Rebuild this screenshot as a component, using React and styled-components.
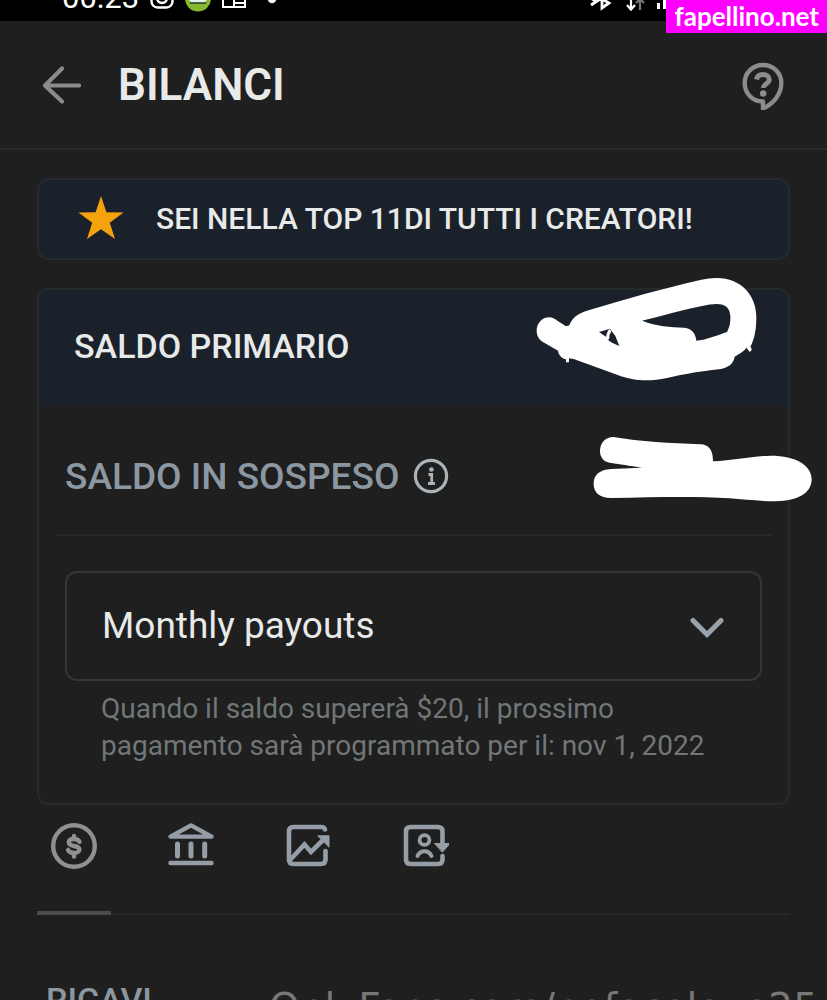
import React, { useState } from 'react'
import styled, { createGlobalStyle } from 'styled-components'

const TABS = ['Ricavi', 'Banca', 'Statistiche', 'Referral']

const TabIcon = ({ name }) => {
  if (name === 'Ricavi') {
    return (
      <svg width="48" height="48" viewBox="0 0 48 48" fill="none" stroke="currentColor">
        <circle cx="24" cy="24" r="20.8" strokeWidth="4.4" />
        <path d="M29.5 19.8c-1-2-3-2.8-5.5-2.8-3 0-5.2 1.2-5.2 3.4 0 5 10.6 2.2 10.6 7 0 2.2-2.300 3.500-5.400 3.500-2.800 0-5-1-6-3M24 14v3M24 31v3.500" strokeWidth="4.400" strokeLinecap="round" />
      </svg>
    )
  }
  if (name === 'Banca') {
    return (
      <svg width="48" height="48" viewBox="0 0 48 48" fill="none" stroke="currentColor" strokeWidth="4.4" strokeLinecap="round" strokeLinejoin="round">
        <path d="M3.500 14.600L24 3.400l20.500 11.200zM3.500 41h41" />
        <path d="M10.500 22v12M24 22v12M37.700 22v12" strokeWidth="5" />
      </svg>
    )
  }
  if (name === 'Statistiche') {
    return (
      <svg width="48" height="48" viewBox="0 0 48 48" fill="none" stroke="currentColor" strokeWidth="4.600" strokeLinecap="round" strokeLinejoin="round">
        <path d="M41 7.500c-.5-2-2-2.500-4-2.500H9.500c-3 0-4.500 1.500-4.500 4.500v28C5 40.500 6.500 42 9.500 42H37c3 0 4.500-1.500 4.500-4.500V29" />
        <path d="M6 38l14.500-15.500 6.500 7.500L40 17" strokeLinejoin="miter" />
        <path d="M34 13.800h11v11z" fill="currentColor" strokeWidth="1" />
      </svg>
    )
  }
  return (
    <svg width="48" height="48" viewBox="0 0 48 48" fill="none" stroke="currentColor" strokeWidth="4.600" strokeLinecap="round">
      <path d="M41.500 23V9.500C41.500 6.500 40 5 37 5H9.500C6.500 5 5 6.500 5 9.500v28C5 40.500 6.500 42 9.500 42H37c3 0 4.500-1.500 4.500-4.500V34" />
      <circle cx="23.500" cy="18" r="4.900" strokeWidth="3.800" />
      <path d="M16.500 34c1.500-3.300 4-4.800 7-4.800s5.500 1.500 7 4.800" strokeWidth="4" />
      <path d="M34 21.500h15L41.500 30z" fill="currentColor" strokeWidth="1" />
    </svg>
  )
}

const Scribbles = () => (
  <ScribbleLayer viewBox="0 0 921 780" aria-hidden="true">
    <path
      fillRule="evenodd"
      d="M88 172c-22 0-38 18-38 40 0 18 8 28 24 37l40 23c2 14 12 24 24 26v9h9v-12l14 2 130 47c55 21 100 20 150 10 55-13 100-19 155-26 30-5 44-16 48-38 18-10 28-18 36-27l8 12c8 0 9-10 3-14 14-28 18-56 18-90 0-66-48-118-120-117-30 1-60 8-90 16l-126 32c-60 17-115 34-165 48-34 9-52 24-60 46l-10 3-26-17c-8-6-16-10-24-10zM366 182c60-14 120-32 180-44 46-10 82-12 85 30 1 24-4 36-10 48-24 8-62 24-92 26-2-22-14-37-36-39-44-2-82-4-127-21zM237 216l33-10 16 22 12 30-22-10c-8-4-14-10-16-16z"
    />
    <path d="M263 238c-1-12 2-20 8-28" fill="none" stroke="#fff" strokeWidth="9" />
    <path d="M280 531c-26 0-40 20-40 42 0 20 12 34 34 36 24 3 54 9 92 14l-92 4c-36 2-53 18-53 44 0 27 18 42 52 43 130-2 250-6 355 1 50 3 90 9 140 9 66-1 107-25 107-66 0-42-48-71-122-71-58 1-110 14-174 17 0-34-12-50-38-51-90-4-180-8-261-22z" />
  </ScribbleLayer>
)

const App = () => {
  const [active, setActive] = useState('Ricavi')
  const [payout, setPayout] = useState('monthly')

  return (
    <Page>
      <GlobalStyle />
      <StatusBar>
        <StatusGroup>
          <Time>00:23</Time>
          <svg width="24" height="24" viewBox="0 0 24 24" fill="none" stroke="#fff" strokeWidth="2.400">
            <rect x="1.500" y="-1.500" width="21" height="21" rx="6" />
            <circle cx="12" cy="10" r="5" />
          </svg>
          <svg width="26" height="24" viewBox="0 0 26 24">
            <circle cx="13" cy="10.500" r="13" fill="#86b82f" />
            <path d="M4 12l2-4h14l2 4-3 3H7z" fill="#e6f0ea" />
            <path d="M5 15h16" stroke="#26352c" strokeWidth="1.500" />
          </svg>
          <svg width="24" height="24" viewBox="0 0 24 24" fill="none" stroke="#fff" strokeWidth="2">
            <path d="M1 0v19h22V0M12 0v19M13 11h10M13 15h10" />
          </svg>
          <Dot viewBox="0 0 10 24">
            <circle cx="5" cy="11" r="4.200" fill="#fff" />
          </Dot>
        </StatusGroup>
        <StatusGroup>
          <svg width="24" height="24" viewBox="0 0 24 24" fill="none" stroke="#fff" strokeWidth="2.800">
            <path d="M1 17L18 6l-6-6v20l7-5L2 5M1 10l4 3" />
          </svg>
          <svg width="20" height="24" viewBox="0 0 20 24" fill="none" strokeWidth="2.200">
            <path d="M6 4v17M2 17l4 4.500 4-4.500" stroke="#fff" />
            <path d="M15 22V11M11 15l4-4 4 4" stroke="#777" />
          </svg>
          <svg width="10" height="24" viewBox="0 0 10 24" fill="#fff">
            <path d="M1 15h3v6H1zM7 6h3v15H7z" />
          </svg>
        </StatusGroup>
        <SiteTag href="#site">fapellino.net</SiteTag>
      </StatusBar>

      <Header>
        <IconButton aria-label="Indietro">
          <svg width="40" height="40" viewBox="0 0 40 40" fill="none" stroke="currentColor" strokeWidth="4.200" strokeLinecap="round" strokeLinejoin="round">
            <path d="M21 3.500L4 20.500l17 16M4 20.500h34" />
          </svg>
        </IconButton>
        <Title>BILANCI</Title>
        <IconButton aria-label="Aiuto">
          <svg width="42" height="50" viewBox="0 -2 42 50" fill="none" stroke="currentColor" strokeWidth="4.400" strokeLinejoin="round">
            <path d="M21 39.500C10 39.500 2.700 31 2.700 21 2.700 10.800 10.800 3 21 3s18.300 7.800 18.300 18c0 11-7.300 20.500-18.300 25.500z" />
            <path d="M14.500 17.500c.6-3.300 3-5 6.500-5 3.600 0 6.300 2 6.300 5 0 4.300-6 4.200-6 8.500" strokeWidth="4.800" />
            <circle cx="21.200" cy="31.500" r="3.200" fill="currentColor" stroke="none" />
          </svg>
        </IconButton>
      </Header>

      <Content>
        <Banner>
          <svg width="46" height="46" viewBox="0 0 46 46" fill="#f5a30d">
            <path d="M23 1l5.400 16.200 17.100.2-13.700 10.300L37 44 23 34.200 9 44l5.200-16.300L.5 17.400l17.100-.2z" />
          </svg>
          SEI NELLA TOP 11DI TUTTI I CREATORI!
        </Banner>

        <Card>
          <Primary>SALDO PRIMARIO</Primary>
          <Pending>
            SALDO IN SOSPESO
            <svg width="36" height="36" viewBox="0 0 36 36" fill="none" stroke="#a9b3b8" strokeWidth="3.200">
              <circle cx="18" cy="18" r="15.600" />
              <circle cx="18.400" cy="11.500" r="2.300" fill="#a9b3b8" stroke="none" />
              <path d="M15.500 16.500h3.200v8.500M15 25.500h7" strokeWidth="2.800" />
            </svg>
          </Pending>
          <Payouts>
            <SelectBox>
              <Select
                id="payouts"
                aria-label="Pagamenti"
                aria-describedby="payouts-hint"
                value={payout}
                onChange={(e) => setPayout(e.target.value)}
              >
                <option value="monthly">Monthly payouts</option>
              </Select>
              <Chevron viewBox="0 0 34 22">
                <path d="M3 3.500l14 14 14-14" />
              </Chevron>
            </SelectBox>
            <Hint id="payouts-hint">
              Quando il saldo supererà $20, il prossimo pagamento sarà programmato per il: nov 1, 2022
            </Hint>
          </Payouts>
          <Scribbles />
        </Card>

        <Tabs>
          {TABS.map((name) => (
            <Tab key={name} aria-label={name} $active={name === active} onClick={() => setActive(name)}>
              <TabIcon name={name} />
            </Tab>
          ))}
        </Tabs>

        <Earnings>
          <Label>RICAVI</Label>
          <Watermark>OnlyFans.com/nofacelove25</Watermark>
        </Earnings>
      </Content>
    </Page>
  )
}

const GlobalStyle = createGlobalStyle`
* {
  box-sizing: border-box;
}
body {
  margin: 0;
  background: #1f1f1f;
  font-family: Roboto, "Liberation Sans", sans-serif;
}
svg {
  display: block;
  flex-shrink: 0;
}
`
const Page = styled.div`
height: 100vh;
overflow: hidden;
color: #e8eaea;
`
const StatusBar = styled.div`
position: relative;
display: flex;
justify-content: space-between;
height: 21px;
padding: 0 161px 9px 62px;
background: #000;
`
const StatusGroup = styled.div`
display: flex;
align-items: flex-end;
gap: 11px;
height: 12px;
`
const Time = styled.span`
font-size: 31px;
line-height: 28px;
color: #fff;
`
const Dot = styled.svg`
width: 10px;
height: 24px;
margin-left: 10px;
`
const SiteTag = styled.a`
position: absolute;
top: 0;
right: 0;
padding: 0 8px 1px;
font-family: Lato, "Liberation Sans", sans-serif;
font-size: 26px;
font-weight: 700;
line-height: 32px;
color: #fff;
background: #ff00ff;
text-decoration: none;
`
const Header = styled.header`
display: flex;
align-items: center;
height: 129px;
padding: 0 43px 0 41px;
border-bottom: 2px solid #272a2a;
`
const IconButton = styled.button`
padding: 0;
border: 0;
background: none;
color: #8b8d8d;
cursor: pointer;
`
const Title = styled.h1`
flex: 1;
margin: 0 0 0 37px;
font-size: 44px;
font-weight: 600;
line-height: 52px;
`
const Content = styled.main`
padding: 28px 37px 0;
`
const Banner = styled.div`
display: flex;
align-items: center;
gap: 32px;
height: 82px;
padding: 0 39px 2px;
border: 2px solid #232b2e;
border-radius: 12px;
background: #1a212a;
font-size: 30px;
font-weight: 500;
`
const Card = styled.section`
position: relative;
margin-top: 28px;
border: 2px solid #252a2a;
border-radius: 12px;
`
const Primary = styled.div`
display: flex;
align-items: center;
height: 116px;
padding: 0 35px 4px;
border-radius: 10px 10px 0 0;
background: #1a212a;
font-size: 34px;
font-weight: 500;
`
const Pending = styled.div`
display: flex;
align-items: center;
gap: 14px;
height: 130px;
margin: 0 16px;
padding: 12px 10px 0;
border-bottom: 2px solid #252a29;
font-size: 37px;
font-weight: 500;
color: #8b97a1;
`
const Payouts = styled.div`
padding: 35px 26px 30px;
`
const SelectBox = styled.div`
position: relative;
`
const Select = styled.select`
display: block;
width: 100%;
height: 110px;
padding: 0 90px 2px 35px;
border: 2px solid #30373a;
border-radius: 12px;
background: transparent;
appearance: none;
font-family: inherit;
font-size: 37px;
color: #e8eaea;
`
const Chevron = styled.svg`
position: absolute;
top: 46px;
right: 38px;
width: 34px;
height: 22px;
fill: none;
stroke: #9aa2ab;
stroke-width: 5;
stroke-linecap: round;
pointer-events: none;
`
const Hint = styled.p`
margin: 0;
padding: 9px 0 9px 36px;
font-size: 28px;
line-height: 37px;
color: #717779;
`
const ScribbleLayer = styled.svg`
position: absolute;
top: -30px;
right: -39px;
width: 307px;
height: 260px;
fill: #fff;
pointer-events: none;
`
const Tabs = styled.nav`
display: flex;
gap: 43px;
border-bottom: 2px solid #262929;
`
const Tab = styled.button`
height: 110px;
margin-bottom: -2px;
padding: 0 13px 25px;
border: 0;
border-bottom: 4px solid ${(props) => (props.$active ? '#4b4c4c' : 'transparent')};
background: none;
color: ${(props) => (props.$active ? '#8f908f' : '#959da6')};
cursor: pointer;
`
const Earnings = styled.div`
display: flex;
justify-content: space-between;
align-items: flex-start;
margin-right: -28px;
padding: 69px 0 0 9px;
white-space: nowrap;
`
const Label = styled.h2`
margin: 0;
font-size: 34px;
font-weight: 500;
line-height: 32px;
color: #8b97a1;
`
const Watermark = styled.span`
font-family: "DejaVu Sans", sans-serif;
font-size: 39px;
line-height: 48px;
color: #777;
`

export default App
